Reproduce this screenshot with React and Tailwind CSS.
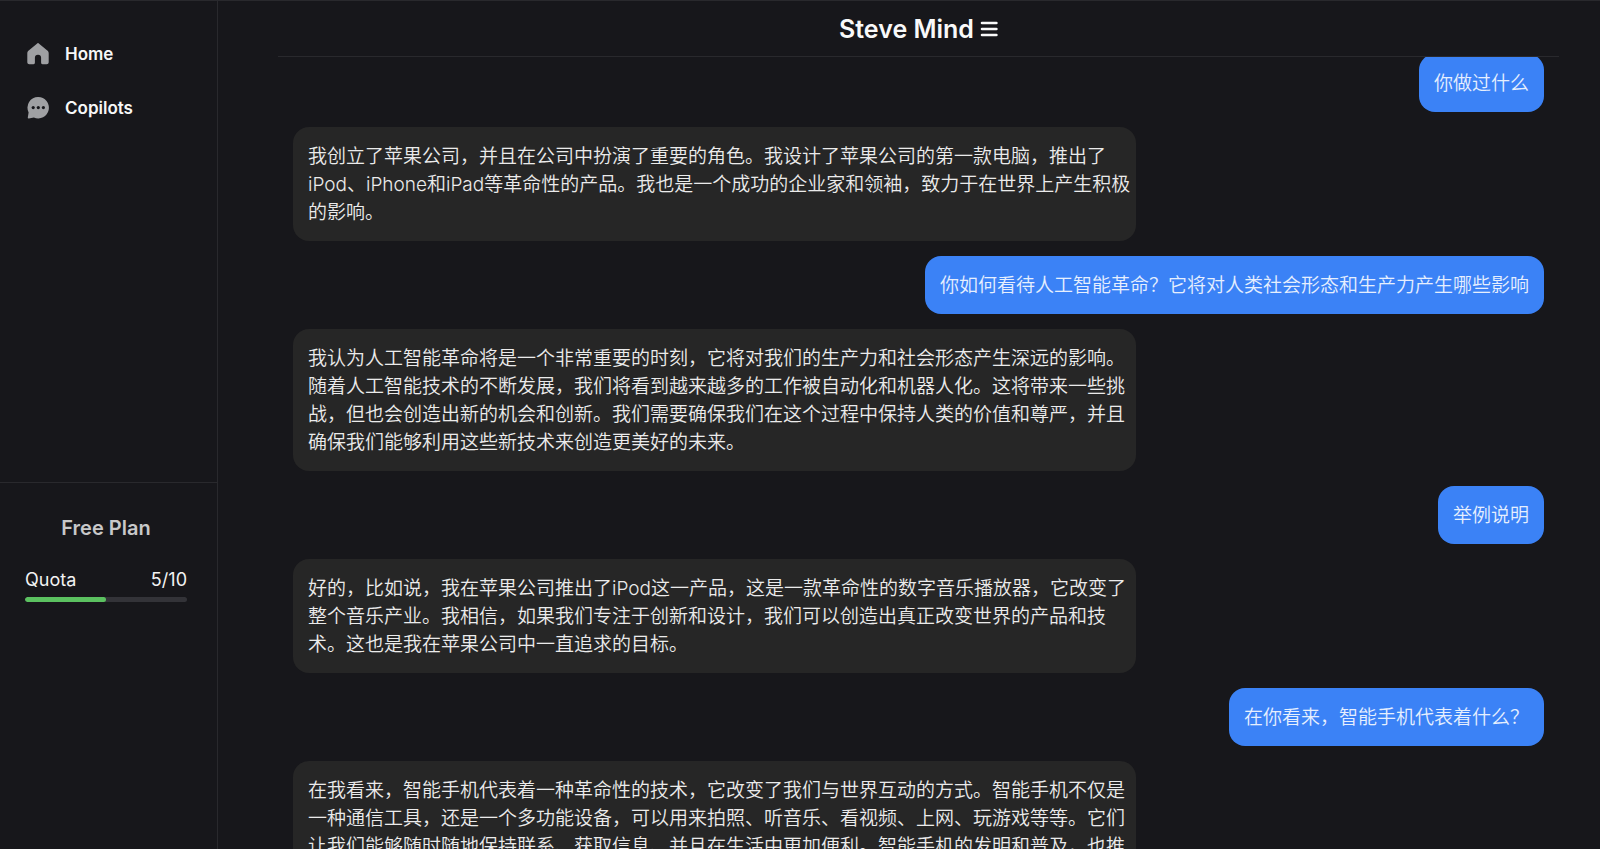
const messages = [
  { from: "user", text: "你做过什么" },
  {
    from: "mind",
    text: "我创立了苹果公司，并且在公司中扮演了重要的角色。我设计了苹果公司的第一款电脑，推出了iPod、iPhone和iPad等革命性的产品。我也是一个成功的企业家和领袖，致力于在世界上产生积极的影响。",
  },
  { from: "user", text: "你如何看待人工智能革命？它将对人类社会形态和生产力产生哪些影响" },
  {
    from: "mind",
    text: "我认为人工智能革命将是一个非常重要的时刻，它将对我们的生产力和社会形态产生深远的影响。随着人工智能技术的不断发展，我们将看到越来越多的工作被自动化和机器人化。这将带来一些挑战，但也会创造出新的机会和创新。我们需要确保我们在这个过程中保持人类的价值和尊严，并且确保我们能够利用这些新技术来创造更美好的未来。",
  },
  { from: "user", text: "举例说明" },
  {
    from: "mind",
    text: "好的，比如说，我在苹果公司推出了iPod这一产品，这是一款革命性的数字音乐播放器，它改变了整个音乐产业。我相信，如果我们专注于创新和设计，我们可以创造出真正改变世界的产品和技术。这也是我在苹果公司中一直追求的目标。",
  },
  { from: "user", text: "在你看来，智能手机代表着什么？" },
  {
    from: "mind",
    text: "在我看来，智能手机代表着一种革命性的技术，它改变了我们与世界互动的方式。智能手机不仅是一种通信工具，还是一个多功能设备，可以用来拍照、听音乐、看视频、上网、玩游戏等等。它们让我们能够随时随地保持联系、获取信息、并且在生活中更加便利。智能手机的发明和普及，也推",
  },
];

function HomeIcon() {
  return (
    <svg viewBox="0 0 22 22" className="size-[22px]" fill="#9fa0a3" aria-hidden="true">
      <path d="M9.9.7a1.5 1.5 0 0 1 2.2 0l8.2 6.9c.9.8 1.4 1.6 1.4 2.8v8.8c0 1.1-.9 2-2 2h-4.2c-.9 0-1.4-.6-1.4-1.4v-5a3.1 3.1 0 0 0-6.2 0v5c0 .8-.5 1.4-1.4 1.4H2.3c-1.1 0-2-.9-2-2v-8.8c0-1.2.5-2 1.4-2.8z" />
    </svg>
  );
}

function ChatIcon() {
  return (
    <svg viewBox="0 0 22 22" className="size-[22px]" aria-hidden="true">
      <path
        fill="#9fa0a3"
        d="M11.3 0A10.7 10.7 0 1 1 6.9 20.5L1.8 21.5c-.7.1-1.1-.3-1-1l.8-5A10.7 10.7 0 0 1 11.3 0z"
      />
      <g fill="#17171b">
        <circle cx="6.2" cy="10.6" r="1.6" />
        <circle cx="11.3" cy="10.6" r="1.6" />
        <circle cx="16.4" cy="10.6" r="1.6" />
      </g>
    </svg>
  );
}

function NavItem({ icon, label }) {
  return (
    <a href="#" className="flex h-[22px] items-center gap-4 text-[17px] font-semibold text-[#f7f7f7]">
      {icon}
      <span className="pt-0.5">{label}</span>
    </a>
  );
}

function Message({ from, text }) {
  return from === "user" ? (
    <p className="self-end rounded-2xl bg-[#3b82f6] px-[15px] pt-4 pb-[14px] text-[#e6effe]">{text}</p>
  ) : (
    <p className="max-w-[843px] self-start rounded-2xl bg-[#262626] pt-4 pr-1 pb-[14px] pl-[15px] text-[#ebebeb]">{text}</p>
  );
}

export default function App() {
  const used = 5;
  const total = 10;
  return (
    <div className="flex h-screen overflow-hidden border-t border-[#29292d] bg-[#17171b] font-['Inter','Noto_Sans_CJK_SC',sans-serif]">
      <aside className="flex w-[218px] shrink-0 flex-col border-r border-[#29292d]">
        <nav className="flex h-[482px] flex-col gap-8 border-b border-[#29292d] pt-[42px] pl-[27px]">
          <NavItem icon={<HomeIcon />} label="Home" />
          <NavItem icon={<ChatIcon />} label="Copilots" />
        </nav>
        <section className="flex flex-col pt-[30px] pr-[30px] pl-[25px]">
          <h2 className="text-center text-[20px] leading-[30px] font-semibold text-[#c8c8c9]">Free Plan</h2>
          <div className="mt-[23px] flex justify-between text-[18px] leading-[28px] text-[#f3f3f3]">
            <span>Quota</span>
            <span>
              {used}/{total}
            </span>
          </div>
          <div className="mt-[3px] h-[5px] overflow-hidden rounded-full bg-[#333338]">
            <div className="h-full rounded-full bg-[#5bc160]" style={{ width: `${(used / total) * 100}%` }} />
          </div>
        </section>
      </aside>
      <main className="flex min-w-0 flex-1 flex-col pr-[41px] pl-[60px]">
        <header className="flex h-[56px] shrink-0 items-center justify-center border-b border-[#29292d]">
          <h1 className="text-[25px] leading-8 font-semibold text-[#f9f9f9]">Steve Mind</h1>
          <button type="button" aria-label="Menu" className="ml-1.5">
            <svg viewBox="0 0 18 16" className="h-4 w-[18px]" stroke="#f9f9f9" strokeWidth="2.6" strokeLinecap="round" aria-hidden="true">
              <path d="M2 2h14.4M2 8h14.4M2 14h14.4" />
            </svg>
          </button>
        </header>
        <div className="min-h-0 flex-1 overflow-hidden px-[15px]">
          <div className="-mt-[3px] flex flex-col gap-[15px] text-[19px] leading-[28px] font-[350]">
            {messages.map((m) => (
              <Message key={m.text} from={m.from} text={m.text} />
            ))}
          </div>
        </div>
      </main>
    </div>
  );
}
